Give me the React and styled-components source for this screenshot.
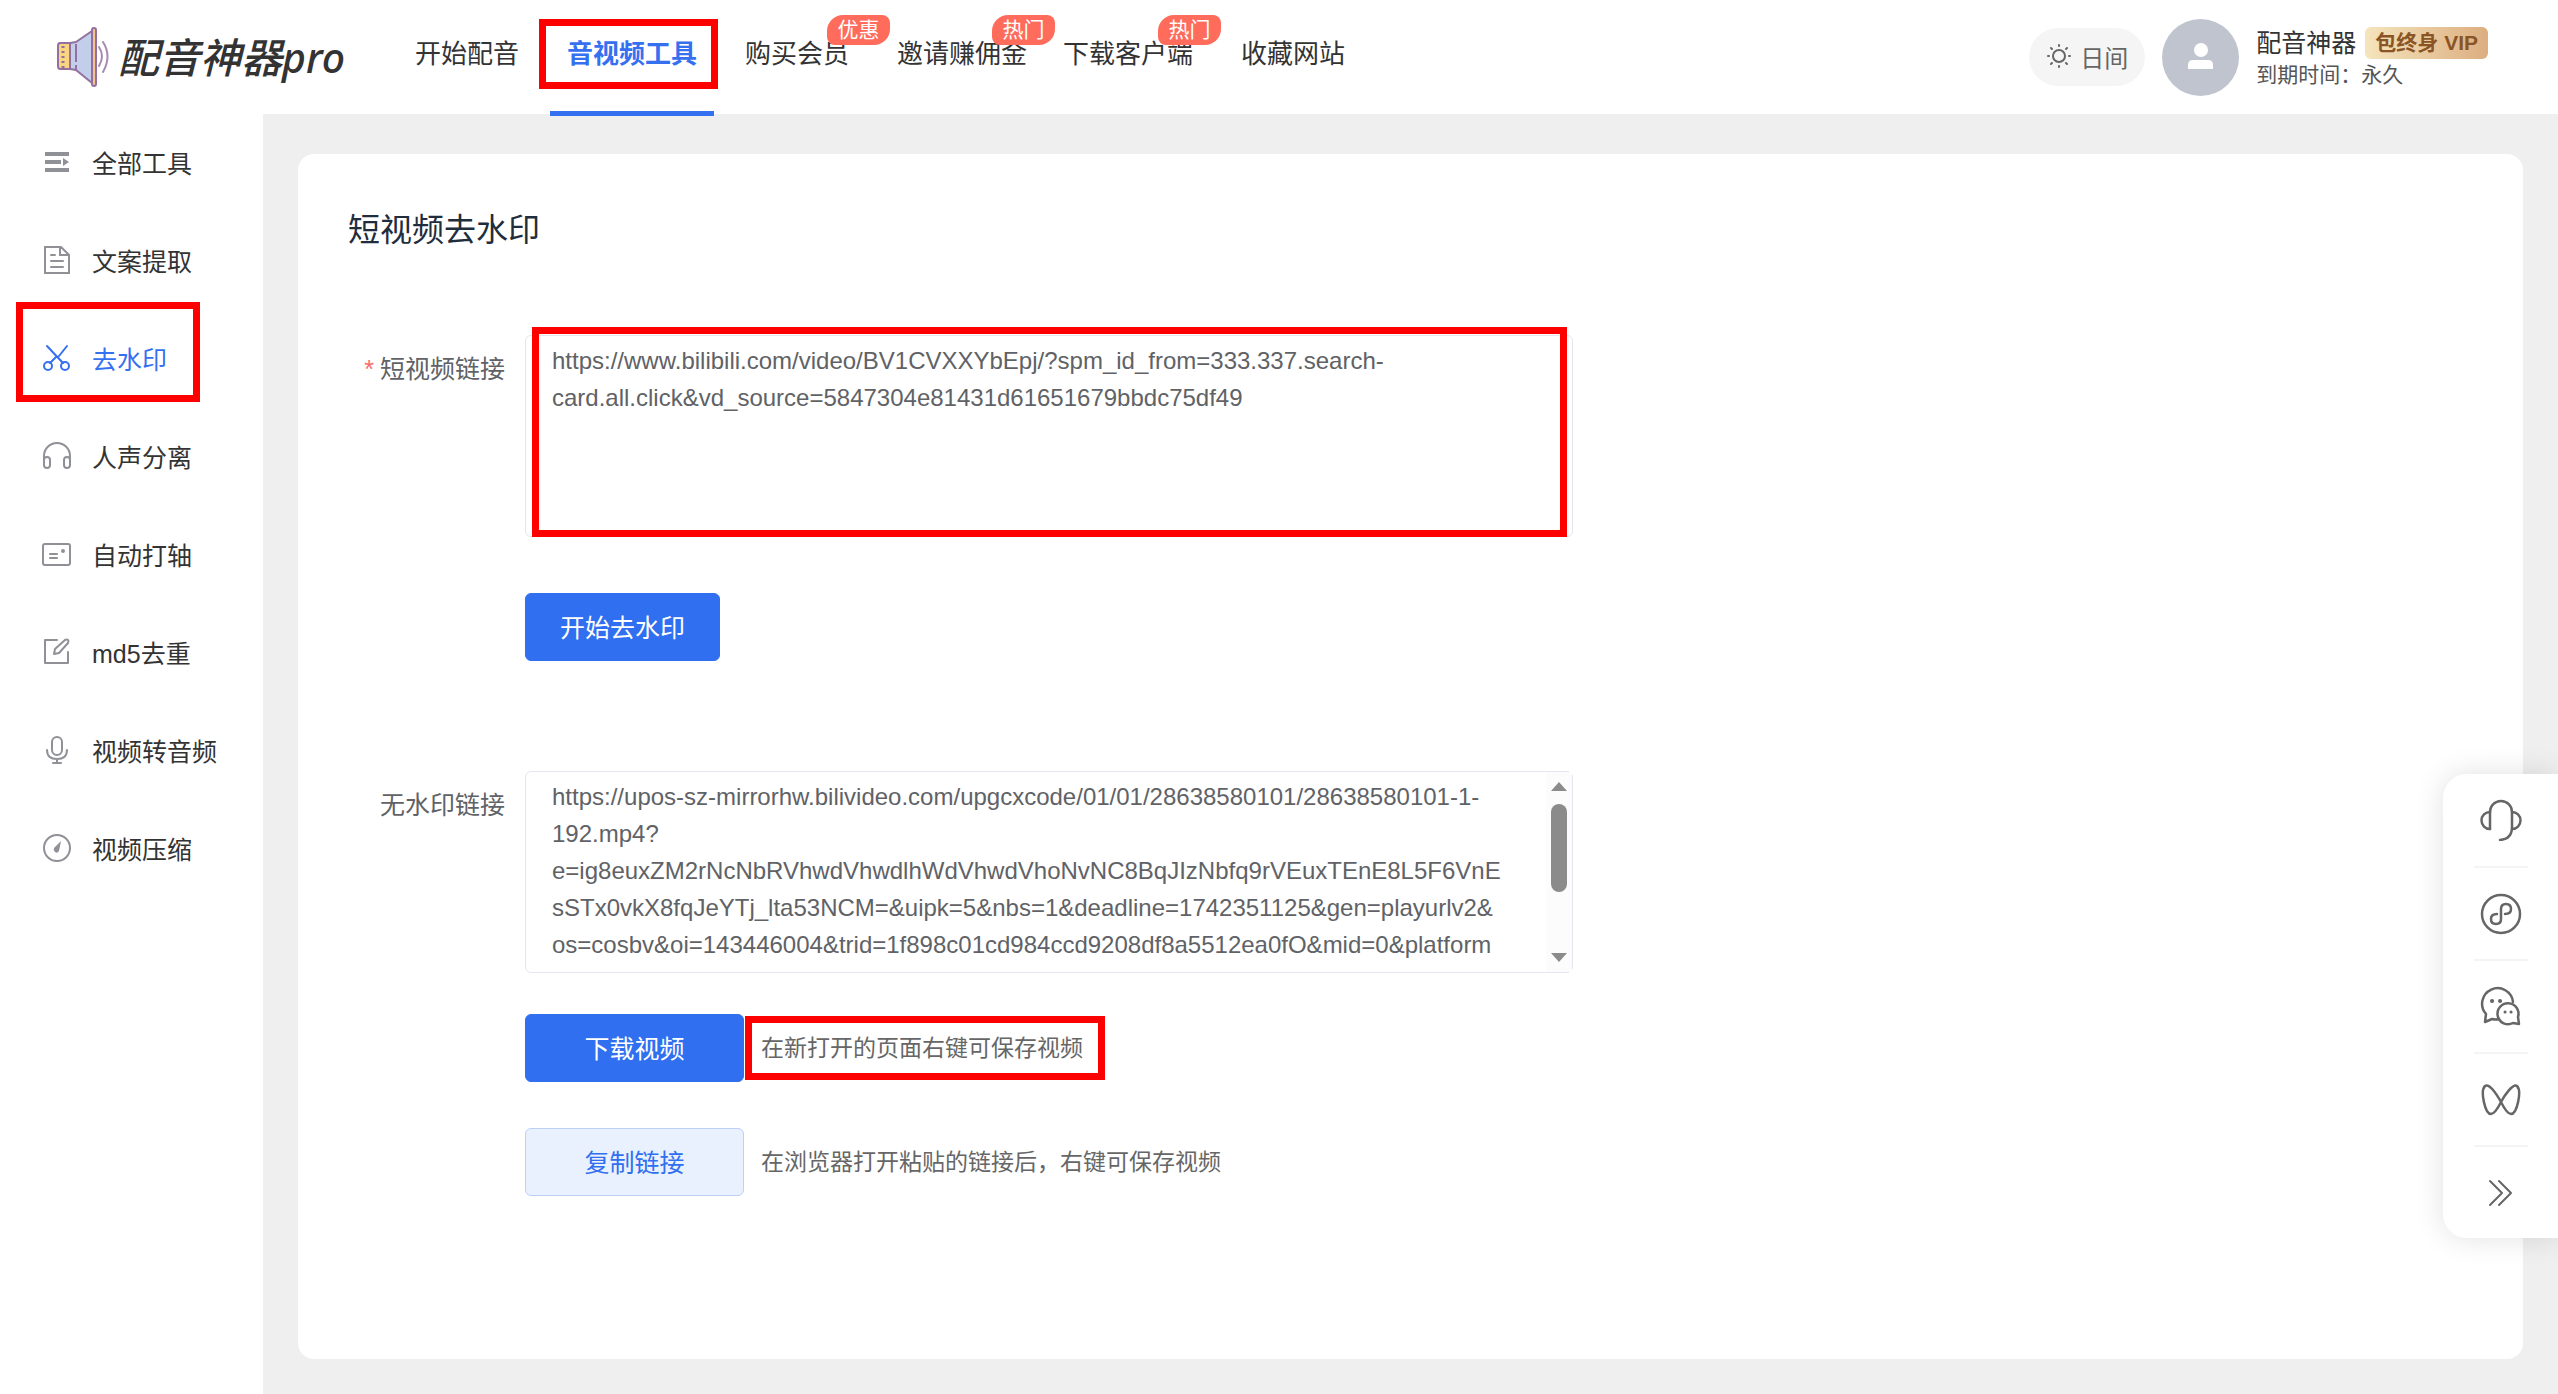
import React from 'react';
import styled, { createGlobalStyle } from 'styled-components';

const GlobalStyle = createGlobalStyle`
  * {
    box-sizing: border-box;
  }

  body {
    margin: 0;
    color: #333;
    background: #efefef;
    font-family: 'Liberation Sans', 'Noto Sans CJK SC', sans-serif;
  }

  button,
  textarea {
    font-family: inherit;
  }
`;

const Page = styled.div`
  display: flex;
  flex-direction: column;
  min-height: 100vh;
`;

const Header = styled.header`
  display: flex;
  align-items: center;
  height: 114px;
  padding: 0 70px 0 56px;
  background: white;
`;

const Logo = styled.a`
  display: flex;
  align-items: center;
  gap: 9px;
  width: 342px;
  color: #333;
  font-family: 'Noto Sans', 'Noto Sans CJK SC', sans-serif;
  font-size: 41px;
  font-weight: 500;
  font-style: italic;
  line-height: 60px;
  white-space: nowrap;
  text-decoration: none;
`;

const Nav = styled.nav`
  display: flex;
  gap: 14px;
`;

const NavLink = styled.a`
  position: relative;
  display: block;
  height: 114px;
  padding: 0 17px;
  margin-right: ${({ $tight }) => ($tight ? '-12px' : 0)};
  color: ${({ $active }) => ($active ? '#3470f0' : '#333')};
  font-size: 26px;
  font-weight: ${({ $active }) => ($active ? 700 : 400)};
  line-height: 108px;
  white-space: nowrap;
  text-decoration: none;

  &::after {
    content: '';
    position: absolute;
    left: 0;
    right: 0;
    bottom: -2px;
    height: 5px;
    background: ${({ $active }) => ($active ? '#3470f0' : 'transparent')};
  }
`;

const NavBadge = styled.span`
  position: absolute;
  top: 15px;
  left: ${({ $wide }) => ($wide ? '112px' : '99px')};
  width: 63px;
  border-radius: 16px 8px 16px 8px;
  color: white;
  background: #ff6c5c;
  font-size: 21px;
  line-height: 30px;
  text-align: center;
`;

/* Red frame that points out one step of the guide. */
const Marker = styled.span`
  position: absolute;
  inset: ${({ $inset }) => $inset};
  border: 7px solid #ff0000;
  pointer-events: none;
`;

const Account = styled.div`
  display: flex;
  align-items: center;
  margin-left: auto;
`;

const ThemeButton = styled.button`
  display: flex;
  align-items: center;
  gap: 8px;
  height: 58px;
  margin-right: 17px;
  padding: 0 17px 2px;
  border: 0;
  border-radius: 29px;
  color: #666;
  background: #f5f5f5;
  font-size: 24px;
`;

const Avatar = styled.div`
  width: 77px;
  height: 77px;
  margin-right: 17px;
  border-radius: 50%;
  background: #c0c4cf;
`;

const UserInfo = styled.div`
  padding-top: 4px;
  line-height: 32px;
`;

const UserName = styled.div`
  display: flex;
  align-items: center;
  gap: 9px;
  font-size: 25px;
`;

const VipTag = styled.span`
  padding: 0 10px;
  border-radius: 6px;
  color: #8a5424;
  background: linear-gradient(90deg, #f5e4bd, #dcae80);
  font-size: 21px;
  font-weight: 700;
`;

const Expiry = styled.div`
  color: #555;
  font-size: 21px;
`;

const Body = styled.div`
  display: flex;
  flex: 1;
`;

const Sidebar = styled.aside`
  flex-shrink: 0;
  width: 263px;
  background: white;
`;

const SideLink = styled.a`
  position: relative;
  display: flex;
  align-items: center;
  gap: 20px;
  height: 98px;
  padding: 0 0 2px 42px;
  color: ${({ $active }) => ($active ? '#3470f0' : '#333')};
  font-size: 25px;
  text-decoration: none;

  svg {
    color: ${({ $active }) => ($active ? '#3470f0' : '#8f9197')};
  }
`;

const Main = styled.main`
  flex: 1;
  display: flex;
  padding: 40px 35px 35px;
`;

const Card = styled.section`
  flex: 1;
  padding: 52px 50px;
  border-radius: 16px;
  background: white;
`;

const Title = styled.h1`
  margin: 0 0 81px;
  color: #1f2d3d;
  font-size: 32px;
  font-weight: 400;
  line-height: 48px;
`;

const Field = styled.div`
  display: flex;
`;

const Label = styled.label`
  width: 157px;
  padding-top: 15px;
  color: #606266;
  font-size: 25px;
  line-height: 38px;
  text-align: right;
`;

const Required = styled.span`
  margin-right: 6px;
  color: #f56c6c;
`;

const TextBox = styled.div`
  position: relative;
  flex: 1;
  max-width: 1048px;
  margin-left: 20px;
`;

const TextArea = styled.textarea`
  display: block;
  width: 100%;
  height: 202px;
  padding: 6px 26px;
  border: 1px solid #e4e7ed;
  border-radius: 6px;
  outline: none;
  overflow: hidden;
  resize: none;
  color: #606266;
  background: white;
  font-size: 24px;
  line-height: 37px;
`;

const ScrollTrack = styled.div`
  position: absolute;
  top: 1px;
  right: 1px;
  bottom: 1px;
  display: flex;
  flex-direction: column;
  align-items: center;
  width: 26px;
  padding: 10px 0;
  background: #fcfcfc;
`;

const ScrollThumb = styled.div`
  width: 16px;
  height: 88px;
  margin: 13px 0 auto;
  border-radius: 8px;
  background: #8b8b8b;
`;

const Actions = styled.div`
  display: flex;
  align-items: center;
  margin: ${({ $margin }) => $margin};
  padding-left: 177px;
`;

const Button = styled.button`
  min-width: ${({ $wide }) => ($wide ? '219px' : '195px')};
  height: 68px;
  padding: 0 16px 3px;
  border: 1px solid ${({ $plain }) => ($plain ? '#bcd0fa' : '#306ff0')};
  border-radius: 6px;
  color: ${({ $plain }) => ($plain ? '#306ff0' : 'white')};
  background: ${({ $plain }) => ($plain ? '#eaf1fe' : '#306ff0')};
  font-size: 25px;
`;

const Hint = styled.span`
  position: relative;
  margin-left: 17px;
  color: #666;
  font-size: 23px;
  line-height: 34px;
`;

const Dock = styled.aside`
  position: fixed;
  right: 0;
  bottom: 156px;
  width: 115px;
  border-radius: 24px 0 0 24px;
  background: white;
  box-shadow: 0 0 30px rgba(0, 0, 0, 0.12);
`;

const DockButton = styled.button`
  display: flex;
  align-items: center;
  justify-content: center;
  width: 54px;
  height: 92px;
  margin: 0 31px;
  padding: 0;
  border: 0;
  color: #666;
  background: none;

  & + & {
    height: 93px;
    border-top: 2px solid #f4f4f4;
  }
`;

const LogoMark = () => (
  <svg width="53" height="62" viewBox="0 0 53 62" fill="none" strokeLinejoin="round">
    <path d="M14 17H4q-2 0-2 3v20q0 3 2 3h10z" fill="#f8d57e" stroke="#93709f" strokeWidth="2" />
    <path d="M14 17l6-1L36 5v52L20 44l-6-1z" fill="#c3cfea" stroke="#93709f" strokeWidth="2" />
    <path d="M20 18v26" stroke="#93709f" strokeWidth="2" strokeDasharray="18 3" />
    <path d="M7 20v22" stroke="#93709f" strokeWidth="3" strokeDasharray="2 3" />
    <rect x="36" y="2" width="4" height="58" rx="2" fill="#f3c48b" stroke="#93709f" strokeWidth="2" />
    <path d="M43 21q6 9 0 19M47 16q9 14 0 30" stroke="#a58bb3" strokeWidth="2" strokeLinecap="round" />
  </svg>
);

const Icon = ({ size = 30, width = 2, children }) => (
  <svg
    width={size}
    height={size}
    viewBox={`0 0 ${size} ${size}`}
    fill="none"
    stroke="currentColor"
    strokeWidth={width}
    strokeLinecap="round"
    strokeLinejoin="round"
    aria-hidden="true"
  >
    {children}
  </svg>
);

const sideItems = [
  {
    text: '全部工具',
    icon: (
      <>
        <path d="M3 7h24M3 15h16M3 23h24" strokeWidth="4" strokeLinecap="butt" />
        <path d="M21 11v8l6-4z" fill="currentColor" stroke="none" />
      </>
    ),
  },
  {
    text: '文案提取',
    icon: <path d="M3 2h16l8 8v18H3zM18 2v8h9M9 10h4M9 16h12M9 22h12" strokeLinejoin="miter" />,
  },
  {
    text: '去水印',
    active: true,
    icon: (
      <>
        <circle cx="6" cy="23" r="4" />
        <circle cx="23" cy="23" r="4" />
        <path d="M5 3l16 17M25 3l-8 10M14 14l-6 6" />
      </>
    ),
  },
  {
    text: '人声分离',
    icon: (
      <>
        <path d="M2 20v-5a13 13 0 0 1 26 0v5" />
        <rect x="2" y="16" width="6" height="11" rx="3" />
        <rect x="22" y="16" width="6" height="11" rx="3" />
      </>
    ),
  },
  {
    text: '自动打轴',
    icon: (
      <>
        <rect x="1" y="5" width="27" height="21" rx="2" />
        <path d="M8 15h7M8 19h7" />
        <circle cx="21" cy="12" r="1" fill="currentColor" />
      </>
    ),
  },
  {
    text: 'md5去重',
    icon: (
      <>
        <path d="M15 3H3v23h23V15" />
        <path d="M12 17l1-5L23 3q2-1 3 0t0 3L17 16z" />
      </>
    ),
  },
  {
    text: '视频转音频',
    icon: (
      <>
        <rect x="10" y="2" width="10" height="18" rx="5" />
        <path d="M5 15q0 9 10 9t10-9M15 24v4M11 28h8" />
      </>
    ),
  },
  {
    text: '视频压缩',
    icon: (
      <>
        <circle cx="15" cy="15" r="13" />
        <path d="M19 8l-2 10q-2 3-4 1t-1-4z" fill="currentColor" stroke="none" />
      </>
    ),
  },
];

const navItems = [
  { text: '开始配音' },
  { text: '音视频工具', active: true },
  { text: '购买会员', badge: '优惠' },
  { text: '邀请赚佣金', badge: '热门', wide: true, tight: true },
  { text: '下载客户端', badge: '热门', wide: true },
  { text: '收藏网站' },
];

const dockItems = [
  {
    name: '在线客服',
    icon: (
      <>
        <path d="M10 30V13a11 11 0 0 1 22 0v15q0 12-12 13" />
        <path d="M10 13a8 8 0 0 0 0 17M32 13a8 8 0 0 1 0 17" />
      </>
    ),
  },
  {
    name: '小程序',
    icon: (
      <>
        <circle cx="21" cy="21" r="19" />
        <path d="M17 21q-6 0-6 5t5 5 5-5V16q0-5 5-5t5 5-6 5" />
      </>
    ),
  },
  {
    name: '微信',
    icon: (
      <>
        <path d="M33 16A15.5 15.5 0 1 0 6 28L5 36l7-3q4 1 7 0" />
        <path d="M33 37a10.5 10.5 0 1 1 5-6l1 7z" />
        <path d="M12 15h.1M20 15h.1" strokeWidth="4" />
        <path d="M25 26h.1M31 26h.1" strokeWidth="3" />
      </>
    ),
  },
  {
    name: '视频号',
    icon: <path d="M21 23C16 14 9 4 5 7c-5 5 0 28 6 28 3 0 7-6 10-12s12-19 16-16c5 5 0 28-6 28-3 0-7-6-10-12z" />,
  },
  { name: '收起', icon: <path d="M10 9l12 12-12 12M19 9l12 12-12 12" strokeWidth="2" /> },
];

const sourceUrl =
  'https://www.bilibili.com/video/BV1CVXXYbEpj/?spm_id_from=333.337.search-card.all.click&vd_source=5847304e81431d61651679bbdc75df49';

const resultUrl = [
  'https://upos-sz-mirrorhw.bilivideo.com/upgcxcode/01/01/28638580101/28638580101-1-',
  '192.mp4?',
  'e=ig8euxZM2rNcNbRVhwdVhwdlhWdVhwdVhoNvNC8BqJIzNbfq9rVEuxTEnE8L5F6VnE',
  'sSTx0vkX8fqJeYTj_lta53NCM=&uipk=5&nbs=1&deadline=1742351125&gen=playurlv2&',
  'os=cosbv&oi=143446004&trid=1f898c01cd984ccd9208df8a5512ea0fO&mid=0&platform',
  '=html5&og=cos&f=u_d_0&bvc=vod&build=0&ff=198318713bvcd5&orderid=0',
].join('\n');

const App = () => (
  <Page>
    <GlobalStyle />
    <Header>
      <Logo href="#">
        <LogoMark />
        配音神器pro
      </Logo>
      <Nav>
        {navItems.map(({ text, badge, active, wide, tight }) => (
          <NavLink key={text} href="#" $active={active} $tight={tight}>
            {text}
            {badge && <NavBadge $wide={wide}>{badge}</NavBadge>}
            {active && <Marker $inset="19px -4px 25px -11px" />}
          </NavLink>
        ))}
      </Nav>
      <Account>
        <ThemeButton type="button">
          <Icon size={26}>
            <circle cx="13" cy="13" r="6" />
            <path d="M13 2v1M13 23v1M2 13h1M23 13h1M5 5l1 1M20 20l1 1M5 21l1-1M20 6l1-1" />
          </Icon>
          日间
        </ThemeButton>
        <Avatar>
          <svg width="77" height="77" viewBox="0 0 77 77" fill="white" aria-hidden="true">
            <circle cx="39" cy="31" r="7" />
            <path d="M26 50v-4q0-5 5-5h15q5 0 5 5v4z" />
          </svg>
        </Avatar>
        <UserInfo>
          <UserName>
            配音神器
            <VipTag>包终身 VIP</VipTag>
          </UserName>
          <Expiry>到期时间：永久</Expiry>
        </UserInfo>
      </Account>
    </Header>
    <Body>
      <Sidebar>
        {sideItems.map(({ text, icon, active }) => (
          <SideLink key={text} href="#" $active={active}>
            <Icon>{icon}</Icon>
            {text}
            {active && <Marker $inset="-8px 63px 6px 16px" />}
          </SideLink>
        ))}
      </Sidebar>
      <Main>
        <Card>
          <Title>短视频去水印</Title>
          <Field>
            <Label htmlFor="source">
              <Required>*</Required>
              短视频链接
            </Label>
            <TextBox>
              <TextArea id="source" defaultValue={sourceUrl} />
              <Marker $inset="-8px 6px 0 7px" />
            </TextBox>
          </Field>
          <Actions $margin="56px 0 110px">
            <Button type="button">开始去水印</Button>
          </Actions>
          <Field>
            <Label htmlFor="result">无水印链接</Label>
            <TextBox>
              <TextArea id="result" defaultValue={resultUrl} />
              <ScrollTrack>
                <svg width="16" height="9" fill="#8b8b8b">
                  <path d="M0 9l8-9 8 9z" />
                </svg>
                <ScrollThumb />
                <svg width="16" height="9" fill="#8b8b8b">
                  <path d="M0 0l8 9 8-9z" />
                </svg>
              </ScrollTrack>
            </TextBox>
          </Field>
          <Actions $margin="41px 0 46px">
            <Button type="button" $wide>
              下载视频
            </Button>
            <Hint>
              在新打开的页面右键可保存视频
              <Marker $inset="-15px -22px -15px -16px" />
            </Hint>
          </Actions>
          <Actions $margin="0">
            <Button type="button" $wide $plain>
              复制链接
            </Button>
            <Hint>在浏览器打开粘贴的链接后，右键可保存视频</Hint>
          </Actions>
        </Card>
      </Main>
    </Body>
    <Dock>
      {dockItems.map(({ name, icon }) => (
        <DockButton key={name} type="button" aria-label={name}>
          <Icon size={42} width={2.5}>
            {icon}
          </Icon>
        </DockButton>
      ))}
    </Dock>
  </Page>
);

export default App;
